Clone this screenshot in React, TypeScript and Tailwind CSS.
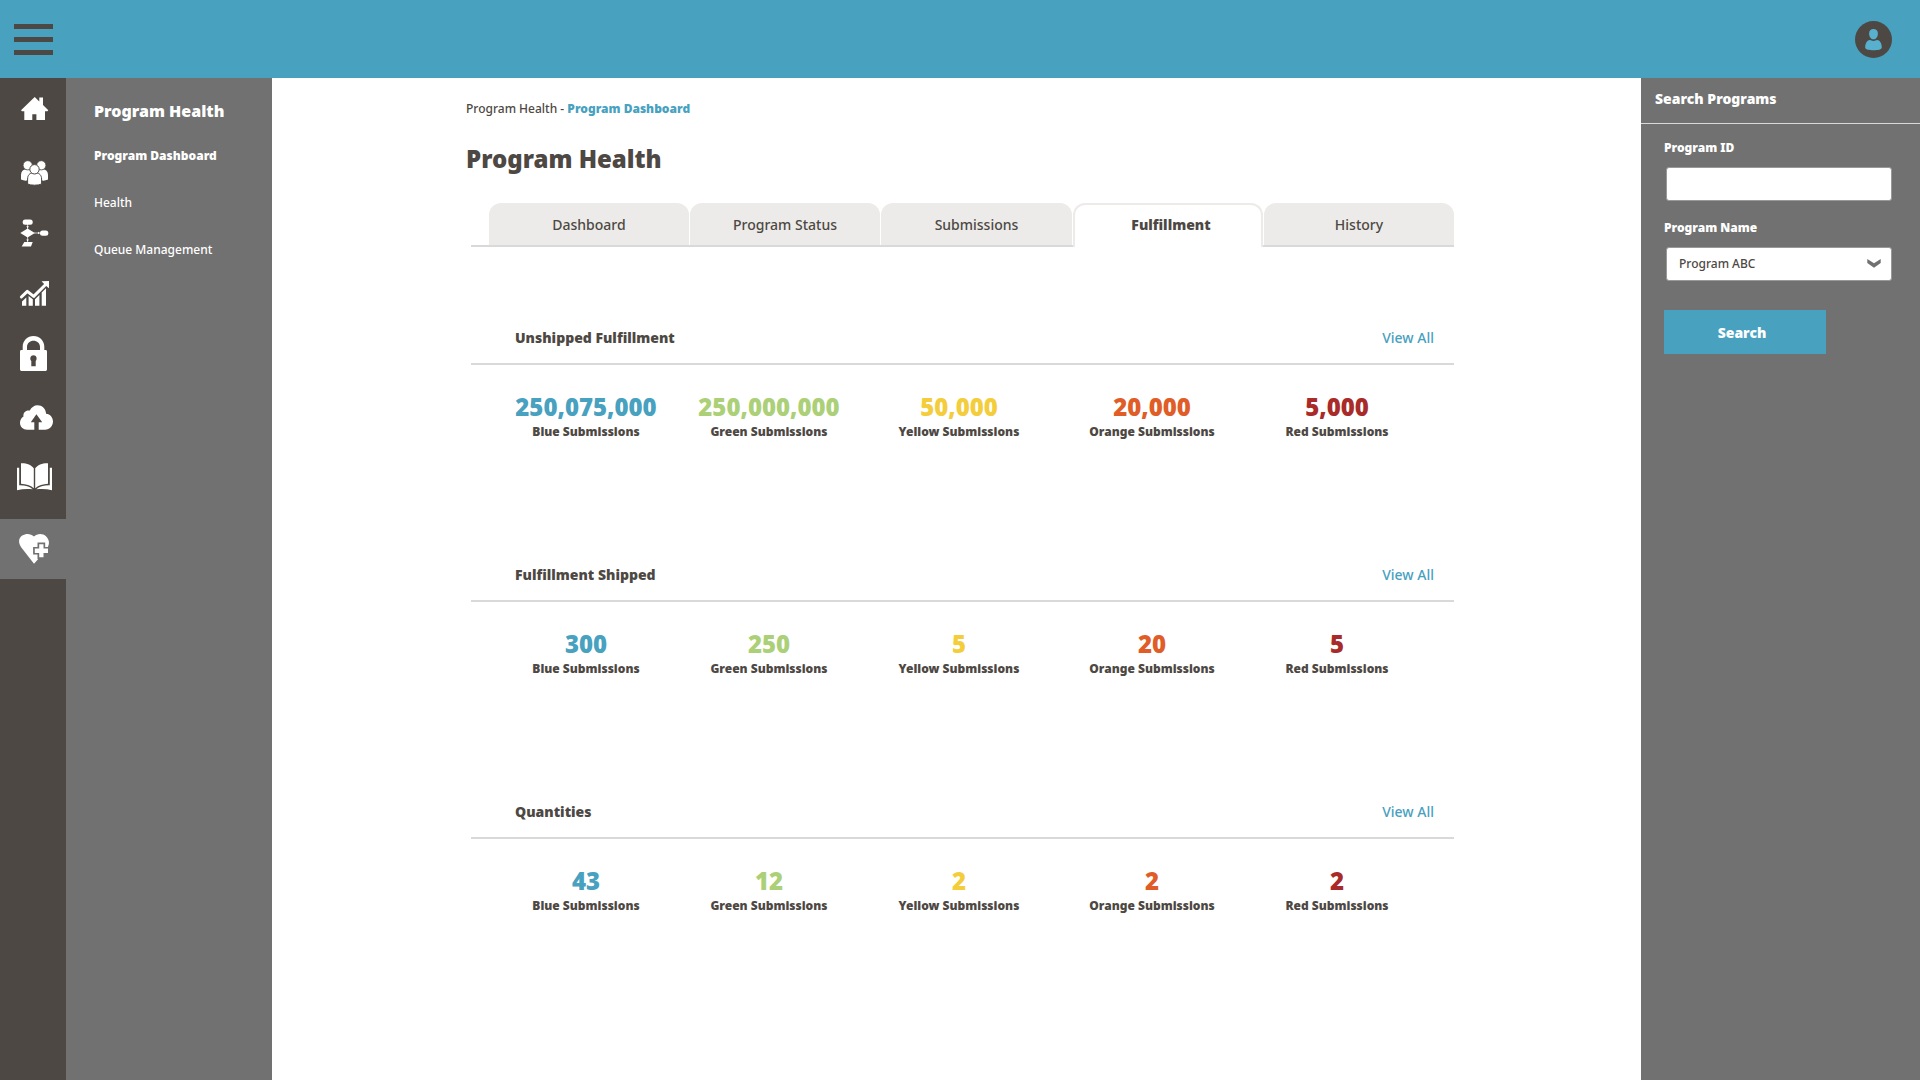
import { useState } from 'react'
import type { ReactNode } from 'react'

const railItems: { name: string; className: string; icon: ReactNode }[] = [
  {
    name: 'Home',
    className: 'mt-px',
    icon: (
      <path d="M21.7 8 26.3 12.5V8.6H30V16L35.3 21.2 34.4 22.3H32V31H23.4V25.3H19.3V31H11.3V22.3H9L8 21.3Z" />
    ),
  },
  {
    name: 'Users',
    className: 'mt-1',
    icon: (
      <>
        <path d="M8 26.6V22C8 18.5 10 16.6 12 16.5H31C33 16.6 35 18.5 35 22V26.6C33 27.6 31 27.8 29 27.6H14C12 27.8 10 27.6 8 26.6Z" />
        <g className="stroke-[#4d4843]" strokeWidth="0.8">
          <circle cx="14.7" cy="12.3" r="4.6" />
          <circle cx="28.3" cy="12.3" r="4.6" />
        </g>
        <g className="stroke-[#4d4843]" strokeWidth="1">
          <path d="M14.6 31V26C14.6 22 17 20.2 19 20H24C26 20.2 28.6 22 28.6 26V31C25 32.6 18 32.6 14.6 31Z" />
          <circle cx="21.5" cy="16.3" r="4.7" />
        </g>
      </>
    ),
  },
  {
    name: 'Workflow',
    className: '',
    icon: (
      <>
        <rect x="9.7" y="6.5" width="10" height="5.3" rx="2.5" />
        <rect x="27" y="17.5" width="8.3" height="5.3" rx="2.5" />
        <path d="M14.6 15.6 21.8 20 14.6 24.4 7.3 20ZM11.3 28.9H19.7L18 33.5H8.7Z" />
        <path d="M14.6 11V16M14.6 24V29M21 20H27" fill="none" className="stroke-white" strokeWidth="0.7" />
        <path d="M13.3 13.3H15.9L14.6 15.3ZM13.3 26.4H15.9L14.6 28.6ZM25 18.7V21.3L26.8 20Z" />
      </>
    ),
  },
  {
    name: 'Reports',
    className: '',
    icon: (
      <>
        <path
          d="M8.4 24 14.3 18.3 20.7 23.4 32.4 11.7"
          fill="none"
          className="stroke-white"
          strokeWidth="3"
          strokeLinecap="round"
          strokeLinejoin="round"
        />
        <path d="M28.5 8.3 36 8V15.3L33.8 13.4 30.4 10.2ZM9 28.4 13.3 24.5V32.7H9ZM15.6 23 19.8 26.2V32.7H15.6ZM22 26.2 26.4 22V32.7H22ZM28.7 19.5 33 15.2V32.7H28.7Z" />
      </>
    ),
  },
  {
    name: 'Security',
    className: '',
    icon: (
      <path
        fillRule="evenodd"
        d="M9.7 17V13.8C9.7 7.6 14.5 3 20.5 3S31.3 7.6 31.3 13.8V17H32.6Q34 17 34 18.4V36.6Q34 38 32.6 38H8.4Q7 38 7 36.6V18.4Q7 17 8.4 17ZM14 17H27V14C27 10.3 24 7.8 20.5 7.8S14 10.3 14 14ZM18.3 33.3H22.7V28C24.6 26 23.6 22.3 20.5 22.3S16.4 26 18.3 28Z"
      />
    ),
  },
  {
    name: 'Upload',
    className: 'mt-1',
    icon: (
      <path d="M14.3 32.7C10 32.7 7 29.5 7 25.7 7 22.8 8.6 20.5 10.5 19.5 9.7 15.5 13.3 12.7 16.8 13.6 18.4 10.3 21.3 8.3 24.6 8.3 29 8.3 32.7 11.4 33.1 16.7 37.2 17 40 20.6 40 24.6 40 29 36.7 32.7 32 32.7H25.7V25.2H29.2L23.4 17.3 17.8 25.2H21.3V32.7Z" />
    ),
  },
  {
    name: 'Library',
    className: '',
    icon: (
      <path d="M8 6.3C13 6 18.5 7.8 20.8 11.3V31.3C17.5 28.4 13 27 8 26.8ZM35 6.3C30 6 24.5 7.8 22.2 11.3V31.3C25.5 28.4 30 27 35 26.8ZM4 10.7H6.2V28.3C12 28.2 17 29.5 19.7 32.3 14 31.8 9 32 4 33.2ZM39 10.7H36.8V28.3C31 28.2 26 29.5 23.3 32.3 29 31.8 34 32 39 33.2Z" />
    ),
  },
  {
    name: 'Program Health',
    className: 'mt-3 bg-[#717171]',
    icon: (
      <>
        <path d="M21 7.6C24 4 30 4.2 33 7.2 36.8 11 36.8 15 34 19.5L24.8 30.5 21 34.8 8.5 18.8C4.8 13.5 5.6 9 9.2 6.6 13.2 3.9 18 4.6 21 7.6Z" />
        <path
          d="M26.2 15.2H30.5V19.6H35V23.9H30.5V28.3H26.2V23.9H21.8V19.6H26.2Z"
          className="stroke-[#717171]"
          strokeWidth="3.4"
          paintOrder="stroke"
        />
      </>
    ),
  },
]

const menu = ['Program Dashboard', 'Health', 'Queue Management']

const tabs = ['Dashboard', 'Program Status', 'Submissions', 'Fulfillment', 'History']

const columns = [
  { label: 'Blue Submissions', color: 'text-[#47a1bf]' },
  { label: 'Green Submissions', color: 'text-[#acd078]' },
  { label: 'Yellow Submissions', color: 'text-[#f4cd3c]' },
  { label: 'Orange Submissions', color: 'text-[#e05d28]' },
  { label: 'Red Submissions', color: 'text-[#a92b29]' },
]

const sections = [
  { title: 'Unshipped Fulfillment', values: ['250,075,000', '250,000,000', '50,000', '20,000', '5,000'] },
  { title: 'Fulfillment Shipped', values: ['300', '250', '5', '20', '5'] },
  { title: 'Quantities', values: ['43', '12', '2', '2', '2'] },
]

function Header() {
  return (
    <header className="flex h-[78px] items-center justify-between bg-[#47a1bf] pl-3.5 pr-7">
      <button type="button" aria-label="Menu" className="flex w-[39px] flex-col gap-2">
        <span className="h-[5px] w-full bg-[#4d4843]" />
        <span className="h-[5px] w-full bg-[#4d4843]" />
        <span className="h-[5px] w-full bg-[#4d4843]" />
      </button>
      <button type="button" aria-label="Account">
        <svg width="37" height="37" viewBox="0 0 37 37">
          <circle cx="18.5" cy="18.5" r="18.5" className="fill-[#4d4843]" />
          <path
            className="fill-[#56b0ce]"
            d="M18.5 8C21.3 8 22.9 9.8 22.9 12.4 22.9 15.5 21.2 18.3 18.5 18.3S14.1 15.5 14.1 12.4C14.1 9.8 15.7 8 18.5 8ZM14.8 19C16 18.8 16.5 20 18.5 20S21 18.8 22.2 19C25.2 19.6 26.8 22.5 26.8 26.5 26.8 28.6 23 29.2 18.5 29.2S10.2 28.6 10.2 26.5C10.2 22.5 11.8 19.6 14.8 19Z"
          />
        </svg>
      </button>
    </header>
  )
}

function Rail() {
  return (
    <nav aria-label="Modules" className="flex w-[66px] shrink-0 flex-col bg-[#4d4843]">
      {railItems.map((item) => (
        <a
          key={item.name}
          href="#"
          aria-label={item.name}
          className={`flex h-15 shrink-0 items-center justify-center ${item.className}`}
        >
          <svg width="40" height="40" viewBox="0 0 40 40" className="fill-white">
            {item.icon}
          </svg>
        </a>
      ))}
    </nav>
  )
}

function SubMenu() {
  return (
    <aside className="w-[206px] shrink-0 bg-[#717171] px-7 pt-[21px] text-white">
      <h2 className="text-base leading-6 font-black whitespace-nowrap">Program Health</h2>
      <ul className="mt-[23px] flex flex-col gap-[27px] text-xs leading-5 whitespace-nowrap">
        {menu.map((name, i) => (
          <li key={name}>
            <a href="#" className={i === 0 ? 'font-black' : 'font-medium'}>
              {name}
            </a>
          </li>
        ))}
      </ul>
    </aside>
  )
}

function Tabs() {
  const [active, setActive] = useState('Fulfillment')

  return (
    <div role="tablist" className="ml-[5px] grid grid-cols-[18fr_201fr_191fr_192fr_190fr_191fr] text-sm">
      <div className="border-b-2 border-[#d9d9d9]" />
      {tabs.map((tab) =>
        tab === active ? (
          <button
            key={tab}
            type="button"
            role="tab"
            aria-selected
            className="h-11 rounded-t-xl border-2 border-b-0 border-[#ecebe9] pb-0.5 pl-1.5 font-black"
          >
            {tab}
          </button>
        ) : (
          <div key={tab} className="flex border-b-2 border-[#d9d9d9] not-last:pr-px last:pl-px">
            <button
              type="button"
              role="tab"
              aria-selected={false}
              onClick={() => setActive(tab)}
              className="h-[42px] flex-1 rounded-t-xl bg-[#ecebe9] pt-0.5 font-medium"
            >
              {tab}
            </button>
          </div>
        ),
      )}
    </div>
  )
}

function Section({ title, values }: { title: string; values: string[] }) {
  return (
    <section className="ml-[5px] h-[237px]">
      <div className="flex h-[53px] items-start justify-between border-b-2 border-[#d9d9d9] pr-5 pl-11 text-sm leading-[52px]">
        <h2 className="font-black">{title}</h2>
        <a href="#" className="font-medium text-[#47a1bf]">
          View All
        </a>
      </div>
      <dl className="grid grid-cols-[180fr_186fr_194fr_192fr_178fr] pt-[26px] pr-7 pl-[25px] text-center">
        {columns.map((column, i) => (
          <div key={column.label} className="flex flex-col-reverse gap-px">
            <dt className="text-xs leading-4 font-black">{column.label}</dt>
            <dd className={`text-2xl leading-8 font-black ${column.color}`}>{values[i]}</dd>
          </div>
        ))}
      </dl>
    </section>
  )
}

function SearchPanel() {
  return (
    <aside className="w-[279px] shrink-0 bg-[#717171] text-white">
      <h2 className="h-[46px] border-b border-[#d9d9d9] pl-3.5 text-sm leading-[42px] font-black">
        Search Programs
      </h2>
      <form className="flex flex-col pt-3.5 pr-7 pl-[23px] text-xs" onSubmit={(e) => e.preventDefault()}>
        <label htmlFor="program-id" className="leading-5 font-black">
          Program ID
        </label>
        <input
          id="program-id"
          type="text"
          className="mt-[9px] ml-0.5 h-[34px] rounded-[3px] border border-[#999999] bg-white px-3 text-[#4d4843]"
        />
        <label htmlFor="program-name" className="mt-[17px] leading-5 font-black">
          Program Name
        </label>
        <div className="relative mt-[9px] ml-0.5">
          <select
            id="program-name"
            className="h-[34px] w-full appearance-none rounded-[3px] border border-[#999999] bg-white px-3 font-medium text-[#4d4843]"
          >
            <option>Program ABC</option>
          </select>
          <svg
            width="14"
            height="9"
            viewBox="0 0 14 9"
            className="pointer-events-none absolute top-3 right-[11px] fill-[#717171]"
          >
            <path d="M0.3 0 7 4.2 13.7 0V4L7 8.8 0.3 4Z" />
          </svg>
        </div>
        <button type="submit" className="mt-[29px] h-11 w-[162px] bg-[#47a1bf] pt-0.5 pr-1.5 text-sm font-black">
          Search
        </button>
      </form>
    </aside>
  )
}

export default function App() {
  return (
    <div className="flex min-h-screen flex-col bg-white font-['Noto_Sans',sans-serif] text-[#4d4843]">
      <Header />
      <div className="flex flex-1">
        <Rail />
        <SubMenu />
        <main className="min-w-0 flex-1">
          <div className="mx-auto max-w-[995px] pl-[7px]">
            <p className="pt-[21px] text-xs leading-5 font-medium">
              Program Health -{' '}
              <a href="#" className="font-black text-[#47a1bf]">
                Program Dashboard
              </a>
            </p>
            <h1 className="mt-6 mb-7 text-2xl leading-8 font-black">Program Health</h1>
            <Tabs />
            <div className="pt-[65px]">
              {sections.map((section) => (
                <Section key={section.title} {...section} />
              ))}
            </div>
          </div>
        </main>
        <SearchPanel />
      </div>
    </div>
  )
}
